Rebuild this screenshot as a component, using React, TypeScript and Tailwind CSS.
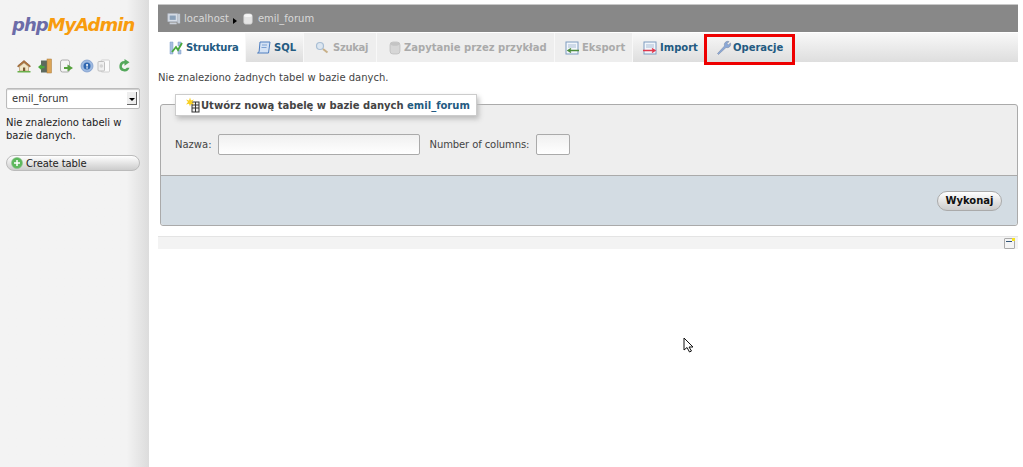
import type { ReactNode } from "react";

const font = "font-['DejaVu_Sans',sans-serif]";

const HomeIcon = () => (
  <svg width="16" height="16" viewBox="0 0 16 16">
    <path d="M1.500 8 8 2.500 14.500 8 13.500 9 8 4.500 2.500 9z" fill="#b5763a" stroke="#7a4a20" strokeWidth=".6" />
    <path d="M3.500 8.500 8 5l4.500 3.500V13h-9z" fill="#f1e6c8" stroke="#a98c5c" strokeWidth=".6" />
    <rect x="7" y="9.500" width="2.200" height="3.500" fill="#7a5a34" />
    <path d="M1.500 13h13v1.500h-13z" fill="#6ab04c" />
  </svg>
);

const ExitIcon = () => (
  <svg width="16" height="16" viewBox="0 0 16 16">
    <rect x="4" y="2.500" width="7" height="12" fill="#5c6a5e" />
    <rect x="10" y="1" width="4.500" height="14" fill="#dba456" stroke="#a97a3a" strokeWidth=".5" />
    <path d="M1 9 4.500 6v2h3v2.200h-3v2z" fill="#4aa63c" />
  </svg>
);

const PageArrowIcon = () => (
  <svg width="16" height="16" viewBox="0 0 16 16">
    <rect x="2.500" y="2" width="9" height="12" rx="2" fill="#f4f4f4" stroke="#9a9a9a" strokeWidth=".8" />
    <path d="M6 9h3.500V6.500L15 10l-5.500 3.500V11H6z" fill="#55a03c" />
  </svg>
);

const HelpIcon = () => (
  <svg width="16" height="16" viewBox="0 0 16 16">
    <circle cx="8" cy="8" r="6" fill="#9db9e0" stroke="#7d9ccc" strokeWidth=".8" />
    <circle cx="8" cy="8" r="3.500" fill="#2f66b0" />
    <rect x="7.300" y="6" width="1.500" height="2.500" fill="#fff" />
    <rect x="7.300" y="9.300" width="1.500" height="1.300" fill="#fff" />
  </svg>
);

const DocsIcon = () => (
  <svg width="16" height="16" viewBox="0 0 16 16">
    <rect x="5" y="2" width="8.500" height="12" rx="1" fill="#fbfbfb" stroke="#c8c8c8" strokeWidth=".8" />
    <rect x="2" y="3.500" width="6.500" height="9.500" rx="1" fill="#f0f0f0" stroke="#b4b4b4" strokeWidth=".8" />
    <circle cx="5.300" cy="8" r="1.800" fill="#d4d4d4" />
  </svg>
);

const ReloadIcon = () => (
  <svg width="16" height="16" viewBox="0 0 16 16">
    <path d="M7.500 3a5.200 5.200 0 1 0 5 6.800H9.800A2.700 2.700 0 1 1 7.500 5.600v2.200L12.500 4.300 7.500 1z" fill="#54a85c" />
  </svg>
);

const ServerIcon = () => (
  <svg width="14" height="14" viewBox="0 0 16 16">
    <rect x="1" y="2" width="11" height="9" fill="#d7dde6" stroke="#b4bcc8" strokeWidth=".8" />
    <rect x="3" y="4" width="7" height="5" fill="#8aa0b8" />
    <rect x="12" y="2" width="3" height="11" fill="#c4ccd6" />
    <rect x="3" y="12" width="8" height="2" fill="#c9cfd8" />
  </svg>
);

const DbIcon = ({ light, size = 16 }: { light?: boolean; size?: number }) => (
  <svg width={size} height={size} viewBox="0 0 16 16">
    <rect x="3" y="2" width="10" height="12" rx="3" fill={light ? "#d6d6d6" : "#e4e4e4"} stroke={light ? "#b4b4b4" : "#bdbdbd"} strokeWidth=".6" />
    <ellipse cx="8" cy="4" rx="4.500" ry="1.800" fill={light ? "#c4c4c4" : "#f6f6f6"} />
  </svg>
);

const StructureIcon = () => (
  <svg width="16" height="16" viewBox="0 0 16 16">
    <path d="M2 2h3v12H2zM10 2h3v4h-3zM10 10h3v4h-3z" fill="#a8bfe0" stroke="#7f9cc8" strokeWidth=".5" />
    <path d="M4 12 8 7l2 3 4-7" fill="none" stroke="#48a83c" strokeWidth="1.800" />
  </svg>
);

const SqlIcon = () => (
  <svg width="16" height="16" viewBox="0 0 16 16">
    <path d="M4 2h10l-1.500 11H1.500q1.500 0 1.700-2z" fill="#d4e2f4" stroke="#4f7fc0" />
    <path d="M6 5h5M5.500 7.500h5" stroke="#7ea3d4" />
  </svg>
);

const SearchIcon = () => (
  <svg width="16" height="16" viewBox="0 0 16 16">
    <circle cx="6" cy="6" r="3.500" fill="#dce6f0" stroke="#a8bed4" strokeWidth="1.200" />
    <path d="m9 9 4.500 3.500" stroke="#c8b088" strokeWidth="2" />
  </svg>
);

const ExportIcon = () => (
  <svg width="16" height="16" viewBox="0 0 16 16">
    <rect x="2" y="2" width="12" height="12" fill="#f2f6fb" stroke="#7f9cc0" />
    <path d="M4 5h8M4 7h8" stroke="#a9bdd6" />
    <path d="M15 10.500H5M7 8.500l-3 2 3 2" fill="none" stroke="#4c8c3c" strokeWidth="1.400" />
  </svg>
);

const ImportIcon = () => (
  <svg width="16" height="16" viewBox="0 0 16 16">
    <rect x="2" y="2" width="12" height="12" fill="#f2f6fb" stroke="#7f9cc0" />
    <path d="M4 5h8M4 7h8" stroke="#a9bdd6" />
    <path d="M1 10.500h11M10 8.500l3 2-3 2" fill="none" stroke="#e0384c" strokeWidth="1.400" />
  </svg>
);

const WrenchIcon = () => (
  <svg width="16" height="16" viewBox="0 0 16 16">
    <path d="M2.500 14.500 1.500 13.500 8.500 6a3.500 3.500 0 0 1 4.500-4.500L11 3.800l1.200 1.200L14.500 3A3.500 3.500 0 0 1 10 7.500z" fill="#8aa8d8" stroke="#7f8fa8" strokeWidth=".6" />
  </svg>
);

const NewTableIcon = () => (
  <svg width="16" height="16" viewBox="0 0 16 16">
    <rect x="7" y="5" width="7" height="10" fill="#f0f0f0" stroke="#333" />
    <path d="M7 8h7M7 11h7M10.500 5v10" stroke="#333" />
    <path d="M5 0.500 6 3.500 9 2.500 7 5l2 2.500-3-.8L5 9.500 4 6.700 1 7.500 3 5 1 2.500l3 1z" fill="#f8d020" />
  </svg>
);

const PlusIcon = () => (
  <svg width="12" height="12" viewBox="0 0 12 12">
    <circle cx="6" cy="6" r="5.500" fill="#5cb85c" stroke="#8ac08a" strokeWidth=".6" />
    <path d="M6 3v6M3 6h6" stroke="#fff" strokeWidth="1.500" />
  </svg>
);

const Cursor = () => (
  <svg width="11" height="16" viewBox="0 0 11 16">
    <path d="M1 1v12l3-2.500L6.500 15l2-1L6 10h4z" fill="#fff" stroke="#111" strokeWidth="1" />
  </svg>
);

const Tab = ({
  icon,
  label,
  active,
  disabled,
  boxed,
  width,
}: {
  icon: ReactNode;
  label: string;
  active?: boolean;
  disabled?: boolean;
  boxed?: boolean;
  width: string;
}) => (
  <div
    className={`relative flex h-[29px] shrink-0 items-center border-r border-[#f8f8f8] text-[10px] font-bold whitespace-nowrap ${width} ${
      active
        ? "bg-white"
        : disabled
          ? "bg-[#eeeeee]"
          : "bg-gradient-to-b from-[#f8f8f8] to-[#dedede]"
    } ${disabled ? "text-[#aaaaaa]" : "text-[#235a81]"}`}
  >
    {icon}
    <span>{label}</span>
    {boxed && <div className="absolute top-[1px] -right-[2px] -bottom-[3px] -left-[2px] border-[3px] border-[#ee0000]" />}
  </div>
);

export default function App() {
  return (
    <div className={`relative flex h-[467px] w-[1023px] overflow-hidden bg-white text-[10px] text-[#444444] ${font}`}>
      {/* SIDEBAR */}
      <div className="flex w-[149px] shrink-0 flex-col bg-gradient-to-r from-[#f3f3f3] from-85% to-[#dcdcdc] pl-[6px] pr-[9px]">
        <div className="mt-[11px] pl-[6px] text-[18px] leading-[28px] font-bold italic tracking-[-1px] whitespace-nowrap">
          <span className="text-[#6c6ca8]">php</span>
          <span className="text-[#f89c0e]">MyAdmin</span>
        </div>
        <div className="mt-[19px] flex items-center gap-[5px] pl-[10px]">
          <HomeIcon />
          <ExitIcon />
          <PageArrowIcon />
          <HelpIcon />
          <div className="-ml-[4px]">
            <DocsIcon />
          </div>
          <ReloadIcon />
        </div>
        <div className="mt-[14px] flex h-[21px] w-[134px] items-center justify-between rounded-[2px] border border-[#bbbbbb] bg-white pl-[5px] pr-[2px] text-[#333333] shadow-[inset_0_1px_1px_#cccccc]">
          <span>emil_forum</span>
          <div className="flex h-[13px] w-[10px] items-center justify-center border-r border-b border-[#666666] bg-[#eeeeee]">
            <div className="mt-[2px] h-0 w-0 border-x-[3px] border-t-[3px] border-x-transparent border-t-black" />
          </div>
        </div>
        <p className="mt-[7px] leading-[13px] text-[#222222]">Nie znaleziono tabeli w bazie danych.</p>
        <div className="mt-[13px] flex h-[16px] w-[134px] items-center gap-[3px] rounded-[8px] border border-[#bbbbbb] bg-gradient-to-b from-[#ffffff] to-[#cccccc] pl-[4px] text-[#222222]">
          <PlusIcon />
          <span className="tracking-[-0.1px]">Create table</span>
        </div>
      </div>

      {/* MAIN */}
      <div className="ml-[9px] flex w-[860px] shrink-0 flex-col">
        <div className="mt-[4px] flex h-[28px] items-center border-t border-[#c8c8c8] bg-[#888888] pl-[9px] text-[#d8d8d8]">
          <ServerIcon />
          <span className="ml-[3px]">localhost</span>
          <div className="mt-[4px] ml-[4px] h-0 w-0 border-y-[3px] border-l-[4px] border-y-transparent border-l-black" />
          <span className="ml-[4px]">
            <DbIcon size={14} />
          </span>
          <span className="ml-[3px]">emil_forum</span>
        </div>
        <div className="mt-[1px] flex bg-gradient-to-b from-[#f8f8f8] to-[#dedede]">
          <Tab icon={<StructureIcon />} label="Struktura" active width="w-[88px] pl-[10px] gap-[2px] tracking-[-0.2px]" />
          <Tab icon={<SqlIcon />} label="SQL" width="w-[58px] pl-[10px] gap-[2px]" />
          <Tab icon={<SearchIcon />} label="Szukaj" disabled width="w-[73px] pl-[10px] gap-[3px] tracking-[-0.3px]" />
          <Tab icon={<DbIcon light />} label="Zapytanie przez przykład" disabled width="w-[178px] pl-[10px] gap-[1px]" />
          <Tab icon={<ExportIcon />} label="Eksport" disabled width="w-[78px] pl-[9px] gap-[2px]" />
          <Tab icon={<ImportIcon />} label="Import" width="w-[73px] pl-[9px] gap-[2px]" />
          <Tab icon={<WrenchIcon />} label="Operacje" boxed width="w-[88px] pl-[10px] gap-[1px]" />
        </div>

        <p className="mt-[9px] leading-[13px]">Nie znaleziono żadnych tabel w bazie danych.</p>

        <div className="relative mt-[20px] ml-[2px] w-[858px] rounded-[3px] border border-[#aaaaaa] bg-[#eeeeee]">
          <div className="absolute -top-[11px] left-[14px] flex h-[22px] w-[302px] items-center border border-[#cccccc] bg-white pl-[9px] font-bold text-[#444444] shadow-[2px_3px_5px_#bbbbbb]">
            <NewTableIcon />
            <span className="whitespace-nowrap">
              Utwórz nową tabelę w bazie danych <span className="text-[#235a81]">emil_forum</span>
            </span>
          </div>
          <div className="flex items-center pt-[29px] pb-[20px] pl-[14px]">
            <span>Nazwa:</span>
            <div className="ml-[6px] h-[21px] w-[202px] rounded-[2px] border border-[#aaaaaa] bg-gradient-to-b from-[#f0f0f0] to-[#ffffff]" />
            <span className="ml-[10px] tracking-[-0.1px]">Number of columns:</span>
            <div className="ml-[7px] h-[21px] w-[34px] rounded-[2px] border border-[#aaaaaa] bg-gradient-to-b from-[#f0f0f0] to-[#ffffff]" />
          </div>
          <div className="flex h-[50px] items-center justify-end rounded-b-[3px] border-t border-[#aaaaaa] bg-[#d3dce3] pr-[15px]">
            <div className="flex h-[20px] w-[65px] items-center justify-center rounded-[10px] border border-[#aaaaaa] bg-gradient-to-b from-[#ffffff] to-[#cccccc] font-bold text-[#111111]">
              Wykonaj
            </div>
          </div>
        </div>

        <div className="mt-[10px] flex h-[13px] items-end justify-end border-t border-[#e4e4e4] bg-[#f3f3f3] pr-[3px]">
          <div className="relative h-[11px] w-[11px] rounded-[1px] border border-[#aaaaaa] bg-[#f4f4f4]">
            <div className="mt-[2px] ml-[1px] h-[1px] w-[6px] bg-[#335577]" />
            <div className="absolute -top-[1px] -right-[1px] h-[3px] w-[3px] bg-[#f5e020]" />
          </div>
        </div>
      </div>

      <div className="absolute top-[337px] left-[683px]">
        <Cursor />
      </div>
    </div>
  );
}
